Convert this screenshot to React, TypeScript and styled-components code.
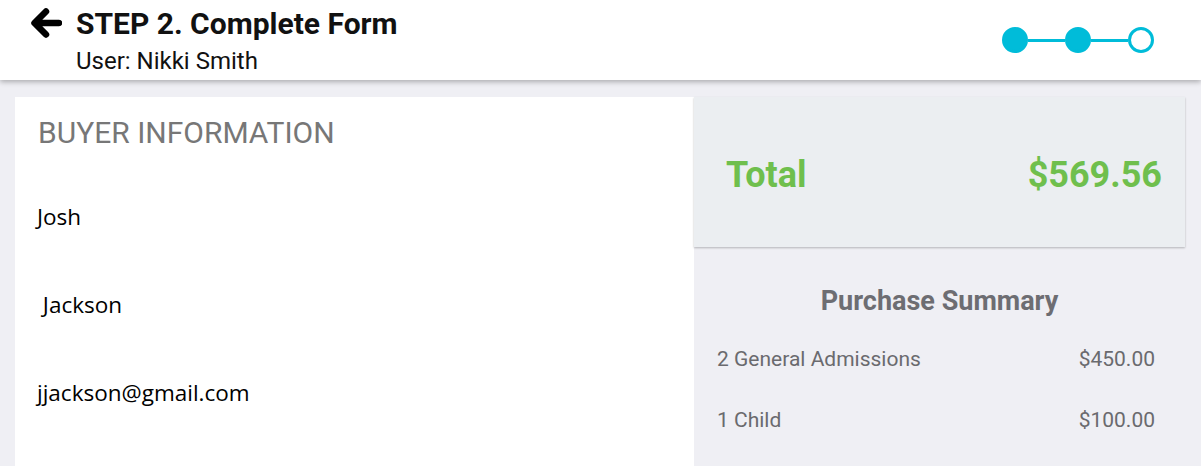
import React from 'react';
import styled, { createGlobalStyle } from 'styled-components';

const GlobalStyle = createGlobalStyle`
  html, body {
    margin: 0;
    padding: 0;
    background: #efeff4;
    font-family: Roboto, 'Liberation Sans', sans-serif;
  }
  * {
    box-sizing: border-box;
  }
`;

const Page = styled.div`
  width: 1201px;
  height: 466px;
  overflow: hidden;
  background: #efeff4;
`;

const Header = styled.header`
  position: relative;
  z-index: 1;
  height: 80px;
  background: #ffffff;
  box-shadow: 0 2px 5px rgba(0, 0, 0, 0.28);
  display: flex;
  justify-content: space-between;
  align-items: center;
  padding: 0 47px 0 28px;
`;

const HeaderLeft = styled.div`
  display: flex;
  align-items: flex-start;
  align-self: flex-start;
  padding-top: 6px;
`;

const BackButton = styled.button`
  width: 34px;
  height: 34px;
  padding: 0;
  margin-right: 14px;
  border: none;
  background: none;
  cursor: pointer;
`;

const TitleBlock = styled.div`
  display: flex;
  flex-direction: column;
  padding-top: 1px;
`;

const Title = styled.h1`
  margin: 0;
  font-size: 30px;
  line-height: 34px;
  font-weight: 700;
  color: #111;
`;

const Subtitle = styled.div`
  margin-top: 6px;
  font-size: 24px;
  line-height: 28px;
  color: #111;
`;

const Stepper = styled.div`
  display: flex;
  align-items: center;
`;

const StepDot = styled.span<{ $done: boolean }>`
  width: 26px;
  height: 26px;
  border-radius: 50%;
  border: 3px solid #00bcd9;
  background: ${p => (p.$done ? '#00bcd9' : '#ffffff')};
`;

const StepLine = styled.span`
  width: 37px;
  height: 3px;
  background: #00bcd9;
`;

const Main = styled.main`
  display: flex;
  padding: 17px 16px 0 15px;
`;

const FormPanel = styled.section`
  width: 679px;
  height: 400px;
  background: #ffffff;
  padding: 19px 22px 0 22px;
`;

const SectionTitle = styled.h2`
  margin: 0 0 23px 1px;
  font-size: 30px;
  line-height: 34px;
  font-weight: 400;
  color: #777777;
`;

const Field = styled.div`
  padding: 29px 0;
  font-family: 'Open Sans', 'Liberation Sans', sans-serif;
  font-size: 22.5px;
  line-height: 30px;
  color: #000;
  white-space: pre;
`;

const SidePanel = styled.aside`
  width: 491px;
  display: flex;
  flex-direction: column;
`;

const TotalCard = styled.div`
  height: 150px;
  background: #ebeef1;
  box-shadow: 0 1px 2px rgba(0, 0, 0, 0.25);
  display: flex;
  justify-content: space-between;
  align-items: center;
  padding: 6px 23px 0 32px;
  color: #6fbf4d;
  font-size: 36px;
  font-weight: 700;
`;

const SummaryTitle = styled.h3`
  margin: 38px 0 11px;
  text-align: center;
  font-size: 27px;
  line-height: 32px;
  font-weight: 700;
  color: #6d6d72;
`;

const SummaryRow = styled.div`
  height: 61px;
  display: flex;
  justify-content: space-between;
  align-items: center;
  padding: 0 30px 0 23px;
  font-size: 21px;
  color: #6a6a6e;
`;

const ArrowBack = () => (
  <svg width="34" height="34" viewBox="0 0 34 34" fill="none">
    <path
      d="M31 17H7M18 5.5L6.5 17L18 28.5"
      stroke="#000"
      strokeWidth="6.5"
      strokeLinecap="round"
      strokeLinejoin="round"
    />
  </svg>
);

const FIELDS = ['Josh', ' Jackson', 'jjackson@gmail.com'];

const ITEMS = [
  { label: '2 General Admissions', price: '$450.00' },
  { label: '1 Child', price: '$100.00' },
];

export default function App() {
  return (
    <Page>
      <GlobalStyle />
      <Header>
        <HeaderLeft>
          <BackButton aria-label="Back">
            <ArrowBack />
          </BackButton>
          <TitleBlock>
            <Title>STEP 2. Complete Form</Title>
            <Subtitle>User: Nikki Smith</Subtitle>
          </TitleBlock>
        </HeaderLeft>
        <Stepper>
          <StepDot $done />
          <StepLine />
          <StepDot $done />
          <StepLine />
          <StepDot $done={false} />
        </Stepper>
      </Header>

      <Main>
        <FormPanel>
          <SectionTitle>BUYER INFORMATION</SectionTitle>
          {FIELDS.map(value => (
            <Field key={value}>{value}</Field>
          ))}
        </FormPanel>

        <SidePanel>
          <TotalCard>
            <span>Total</span>
            <span>$569.56</span>
          </TotalCard>
          <SummaryTitle>Purchase Summary</SummaryTitle>
          {ITEMS.map(item => (
            <SummaryRow key={item.label}>
              <span>{item.label}</span>
              <span>{item.price}</span>
            </SummaryRow>
          ))}
        </SidePanel>
      </Main>
    </Page>
  );
}
